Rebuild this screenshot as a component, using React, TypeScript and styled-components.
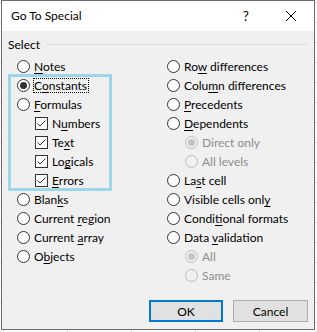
import React, { FC } from 'react';
import styled, { createGlobalStyle } from 'styled-components';

const GlobalStyle = createGlobalStyle`
  html, body {
    margin: 0;
    padding: 0;
  }

  body {
    width: 317px;
    height: 332px;
    overflow: hidden;
    background-color: #fff;
    background-image: linear-gradient(to right, #dadada 1px, transparent 1px),
      linear-gradient(to bottom, #dadada 1px, transparent 1px);
    background-size: 64px 20px;
    background-position: 3px 2px;
    font-family: Lato, 'Noto Sans', 'Liberation Sans', sans-serif;
    font-size: 12px;
    color: #000;
  }
`;

const Dialog = styled.div`
  position: relative;
  margin-left: 1px;
  width: 314px;
  height: 330px;
  box-sizing: border-box;
  border: 1px solid #6e6e6e;
  background: #f0f0f0;
  display: flex;
  flex-direction: column;
`;

const TitleBar = styled.div`
  height: 30px;
  background: #fff;
  display: flex;
  align-items: center;
  padding-left: 9px;

  .title {
    flex: 1;
    line-height: 16px;
  }
`;

const HelpButton = styled.div`
  width: 30px;
  margin-right: 7px;
  text-align: center;
  font-size: 13px;
`;

const CloseButton = styled.div`
  width: 46px;
  height: 30px;
  display: flex;
  align-items: center;
  justify-content: center;
`;

const Body = styled.div`
  flex: 1;
  display: flex;
  flex-direction: column;
  padding: 5px 6px 7px 6px;
`;

const GroupHeader = styled.div`
  display: flex;
  align-items: center;
  gap: 6px;
  height: 16px;

  &::after {
    content: '';
    flex: 1;
    height: 1px;
    background: #dcdcdc;
  }
`;

const Options = styled.div`
  display: grid;
  grid-template-columns: 150px 1fr;
  margin: 5px 0 0 9px;
`;

const Column = styled.div`
  display: flex;
  flex-direction: column;
`;

const Option = styled.div<{ $indent?: boolean; $disabled?: boolean }>`
  display: flex;
  align-items: center;
  gap: 4px;
  height: 19px;
  padding-left: ${p => (p.$indent ? 18 : 0)}px;
  color: ${p => (p.$disabled ? '#8d8d8d' : '#000')};
  white-space: nowrap;

  u {
    text-decoration: underline;
    text-underline-offset: 2px;
  }
`;

const Label = styled.span<{ $focus?: boolean }>`
  line-height: 13px;
  ${p =>
    p.$focus &&
    `
    border: 1px dotted #000;
    margin-left: -1px;
    padding-right: 1px;
  `}
`;

const RadioCircle = styled.span<{ $checked?: boolean; $disabled?: boolean }>`
  flex: none;
  width: 13px;
  height: 13px;
  box-sizing: border-box;
  border-radius: 50%;
  border: 1px solid ${p => (p.$disabled ? '#bcbcbc' : '#333')};
  background: ${p => (p.$disabled ? '#f0f0f0' : '#fff')};
  display: flex;
  align-items: center;
  justify-content: center;

  &::after {
    content: '';
    width: 7px;
    height: 7px;
    border-radius: 50%;
    background: ${p => (p.$disabled ? '#c4c4c4' : '#333')};
    display: ${p => (p.$checked ? 'block' : 'none')};
  }
`;

const CheckSquare = styled.span`
  flex: none;
  width: 13px;
  height: 13px;
  box-sizing: border-box;
  border: 1px solid #333;
  background: #fff;
  display: flex;
`;

const Footer = styled.div`
  margin-top: auto;
  display: flex;
  justify-content: flex-end;
  gap: 10px;
`;

const Button = styled.button<{ $default?: boolean }>`
  width: ${p => (p.$default ? 74 : 75)}px;
  height: 22px;
  box-sizing: border-box;
  padding: 0;
  background: #e1e1e1;
  border: ${p => (p.$default ? '2px solid #0078d7' : '1px solid #adadad')};
  font-family: inherit;
  font-size: 12px;
  color: #000;
`;

const Highlight = styled.div`
  position: absolute;
  left: 6px;
  top: 73px;
  width: 104px;
  height: 117px;
  box-sizing: border-box;
  border: 3px solid #9dd6ea;
  pointer-events: none;
`;

type Item = {
  text: string;
  key?: number;
  kind: 'radio' | 'check';
  checked?: boolean;
  disabled?: boolean;
  indent?: boolean;
  focus?: boolean;
};

const leftItems: Item[] = [
  { text: 'Notes', key: 0, kind: 'radio' },
  { text: 'Constants', key: 1, kind: 'radio', checked: true, focus: true },
  { text: 'Formulas', key: 0, kind: 'radio' },
  { text: 'Numbers', key: 1, kind: 'check', checked: true, indent: true },
  { text: 'Text', key: 2, kind: 'check', checked: true, indent: true },
  { text: 'Logicals', key: 2, kind: 'check', checked: true, indent: true },
  { text: 'Errors', key: 0, kind: 'check', checked: true, indent: true },
  { text: 'Blanks', key: 4, kind: 'radio' },
  { text: 'Current region', key: 8, kind: 'radio' },
  { text: 'Current array', key: 8, kind: 'radio' },
  { text: 'Objects', key: 1, kind: 'radio' },
];

const rightItems: Item[] = [
  { text: 'Row differences', key: 2, kind: 'radio' },
  { text: 'Column differences', key: 4, kind: 'radio' },
  { text: 'Precedents', key: 0, kind: 'radio' },
  { text: 'Dependents', key: 0, kind: 'radio' },
  { text: 'Direct only', kind: 'radio', checked: true, disabled: true, indent: true },
  { text: 'All levels', kind: 'radio', disabled: true, indent: true },
  { text: 'Last cell', key: 2, kind: 'radio' },
  { text: 'Visible cells only', key: 17, kind: 'radio' },
  { text: 'Conditional formats', key: 5, kind: 'radio' },
  { text: 'Data validation', key: 5, kind: 'radio' },
  { text: 'All', kind: 'radio', checked: true, disabled: true, indent: true },
  { text: 'Same', kind: 'radio', disabled: true, indent: true },
];

const Mnemonic: FC<{ text: string; at?: number }> = ({ text, at }) =>
  at === undefined ? (
    <>{text}</>
  ) : (
    <>
      {text.slice(0, at)}
      <u>{text[at]}</u>
      {text.slice(at + 1)}
    </>
  );

const Check = () => (
  <CheckSquare>
    <svg width="11" height="11" viewBox="0 0 11 11">
      <path d="M1.5 5.5 L4 8 L9.5 2.5" fill="none" stroke="#333" strokeWidth="1" />
    </svg>
  </CheckSquare>
);

const OptionRow: FC<{ item: Item }> = ({ item }) => (
  <Option $indent={item.indent} $disabled={item.disabled}>
    {item.kind === 'radio' ? (
      <RadioCircle $checked={item.checked} $disabled={item.disabled} />
    ) : (
      <Check />
    )}
    <Label $focus={item.focus}>
      <Mnemonic text={item.text} at={item.key} />
    </Label>
  </Option>
);

const App: FC = () => (
  <>
    <GlobalStyle />
    <Dialog>
      <TitleBar>
        <span className="title">Go To Special</span>
        <HelpButton>?</HelpButton>
        <CloseButton>
          <svg width="10" height="10" viewBox="0 0 10 10">
            <path d="M0 0 L10 10 M10 0 L0 10" stroke="#000" strokeWidth="1" />
          </svg>
        </CloseButton>
      </TitleBar>
      <Body>
        <GroupHeader>Select</GroupHeader>
        <Options>
          <Column>
            {leftItems.map(item => (
              <OptionRow key={item.text} item={item} />
            ))}
          </Column>
          <Column>
            {rightItems.map(item => (
              <OptionRow key={item.text} item={item} />
            ))}
          </Column>
        </Options>
        <Footer>
          <Button $default>OK</Button>
          <Button>Cancel</Button>
        </Footer>
      </Body>
      <Highlight />
    </Dialog>
  </>
);

export default App;
